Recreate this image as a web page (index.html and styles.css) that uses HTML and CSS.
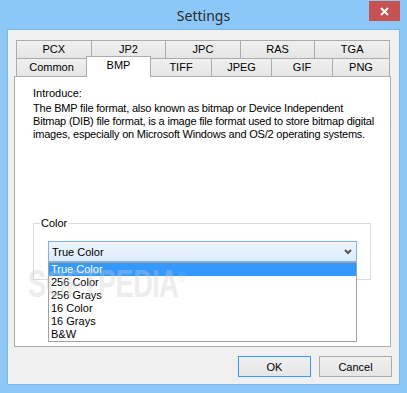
FILE: index.html
```html
<!DOCTYPE html>
<html lang="en">
<head>
  <meta charset="UTF-8">
  <title>Settings</title>
  <link rel="stylesheet" href="styles.css">
</head>
<body>

  <div class="window">
    <div class="titlebar">
      <span class="title">Settings</span>
      <button class="close-btn" title="Close">
        <svg width="9" height="9" viewBox="0 0 9 9"><path d="M1 1 L8 8 M8 1 L1 8" stroke="#fff" stroke-width="2"/></svg>
      </button>
    </div>

    <div class="client">
      <div class="tabs">
        <div class="tab-row back">
          <div class="tab">PCX</div>
          <div class="tab">JP2</div>
          <div class="tab">JPC</div>
          <div class="tab">RAS</div>
          <div class="tab">TGA</div>
        </div>
        <div class="tab-row front">
          <div class="tab">Common</div>
          <div class="tab selected">BMP</div>
          <div class="tab">TIFF</div>
          <div class="tab">JPEG</div>
          <div class="tab">GIF</div>
          <div class="tab">PNG</div>
        </div>
      </div>

      <div class="panel">
        <p class="intro-label">Introduce:</p>
        <p class="intro-text">The BMP file format, also known as bitmap or Device Independent<br>Bitmap (DIB) file format, is a image file format used to store bitmap digital<br>images, especially on Microsoft Windows and OS/2 operating systems.</p>

        <div class="group">
          <span class="group-label">Color</span>
          <div class="combo">
            <span>True Color</span>
            <svg width="8" height="6" viewBox="0 0 8 6"><path d="M1 1 L4 4 L7 1" fill="none" stroke="#555" stroke-width="2"/></svg>
            <ul class="dropdown">
              <li class="active">True Color</li>
              <li>256 Color</li>
              <li>256 Grays</li>
              <li>16 Color</li>
              <li>16 Grays</li>
              <li>B&amp;W</li>
            </ul>
          </div>
        </div>

        <div class="watermark">SOFTPEDIA<sup>®</sup></div>
      </div>

      <div class="buttons">
        <button class="btn default">OK</button>
        <button class="btn">Cancel</button>
      </div>
    </div>
  </div>

</body>
</html>
```

FILE: styles.css
```css
body {
  margin: 0;
  padding: 0;
  font-family: 'Liberation Sans', Arial, sans-serif;
  font-size: 11px;
  color: #000;
}

.window {
  width: 407px;
  height: 393px;
  box-sizing: border-box;
  background: #8bc7f7;
  padding: 0 7px 8px 7px;
  display: flex;
  flex-direction: column;
}

.titlebar {
  height: 29px;
  display: grid;
  grid-template-columns: 1fr auto 1fr;
}

.title {
  grid-column: 2;
  font-family: 'Noto Sans', sans-serif;
  font-size: 14px;
  color: #2b2b2b;
  line-height: 29px;
  padding-top: 1px;
}

.close-btn {
  grid-column: 3;
  justify-self: end;
  align-self: start;
  margin-top: 1px;
  width: 31px;
  height: 20px;
  background: #c75050;
  border: none;
  padding: 1px 0 0 0;
  display: flex;
  align-items: center;
  justify-content: center;
}

.client {
  flex: 1;
  background: #f0f0f0;
  border: 1px solid #7db5e6;
  padding: 10px 7px 7px 6px;
}

/* tabs */
.tabs {
  margin: 0 2px 0 2px;
}

.tab-row {
  display: flex;
  height: 18px;
}

.tab {
  box-sizing: border-box;
  height: 18px;
  border: 1px solid #acacac;
  border-bottom: none;
  background: linear-gradient(#f0f0f0, #e5e5e5);
  text-align: center;
  line-height: 16px;
  margin-left: -1px;
}

.tab:first-child {
  margin-left: 0;
}

.back .tab {
  flex: 1 1 0;
}

.front .tab:nth-child(1) { width: 71px; }
.front .tab:nth-child(2) { width: 65px; }
.front .tab:nth-child(3) { width: 62px; }
.front .tab:nth-child(4) { width: 61px; }
.front .tab:nth-child(5) { width: 62px; }
.front .tab:nth-child(6) { width: 58px; }

.tab.selected {
  background: #fff;
  height: 21px;
  margin-top: -2px;
  line-height: 16px;
  z-index: 1;
}

/* panel */
.panel {
  position: relative;
  height: 271px;
  box-sizing: border-box;
  background: #fff;
  border: 1px solid #adadad;
  margin-right: 1px;
  padding: 10px 19px 0 18px;
}

.intro-label,
.intro-text {
  margin: 0;
  line-height: 13px;
  white-space: nowrap;
}

.intro-text {
  margin-top: 2px;
  letter-spacing: -0.2px;
}

.group {
  margin-top: 82px;
  border: 1px solid #dcdcdc;
  padding: 0 0 17px 14px;
}

.group-label {
  display: block;
  width: max-content;
  margin: -7px 0 0 -8px;
  padding: 0 1px;
  background: #fff;
  line-height: 13px;
}

.combo {
  position: relative;
  margin-top: 11px;
  width: 309px;
  height: 21px;
  box-sizing: border-box;
  border: 1px solid #7eb4ea;
  background: linear-gradient(#ecf4fc, #dcecfc);
  display: flex;
  align-items: center;
  justify-content: space-between;
  padding: 0 4px 0 3px;
}

.dropdown {
  position: absolute;
  top: calc(100% + 1px);
  left: -1px;
  width: 309px;
  box-sizing: border-box;
  margin: 0;
  padding: 0;
  list-style: none;
  background: #fff;
  border: 1px solid #a0a0a0;
  z-index: 2;
}

.dropdown li {
  height: 13px;
  line-height: 13px;
  padding-left: 2px;
}

.dropdown li.active {
  background: #3399ff;
  color: #fff;
}

.watermark {
  position: absolute;
  left: 13px;
  top: 186px;
  font-size: 38px;
  font-weight: bold;
  letter-spacing: -1px;
  transform: scaleX(0.72);
  transform-origin: left top;
  color: rgba(240, 240, 240, 0.3);
  text-shadow: 0 0 1px rgba(0, 0, 0, 0.08);
  z-index: 3;
  pointer-events: none;
}

.watermark sup {
  font-size: 14px;
  font-weight: normal;
}

/* buttons */
.buttons {
  display: flex;
  justify-content: flex-end;
  gap: 8px;
  margin-top: 9px;
}

.btn {
  width: 73px;
  height: 21px;
  font-family: 'Liberation Sans', Arial, sans-serif;
  font-size: 11px;
  background: linear-gradient(#f0f0f0, #e5e5e5);
  border: 1px solid #acacac;
  padding: 0;
  color: #000;
}

.btn.default {
  border-color: #3399ff;
}
```
